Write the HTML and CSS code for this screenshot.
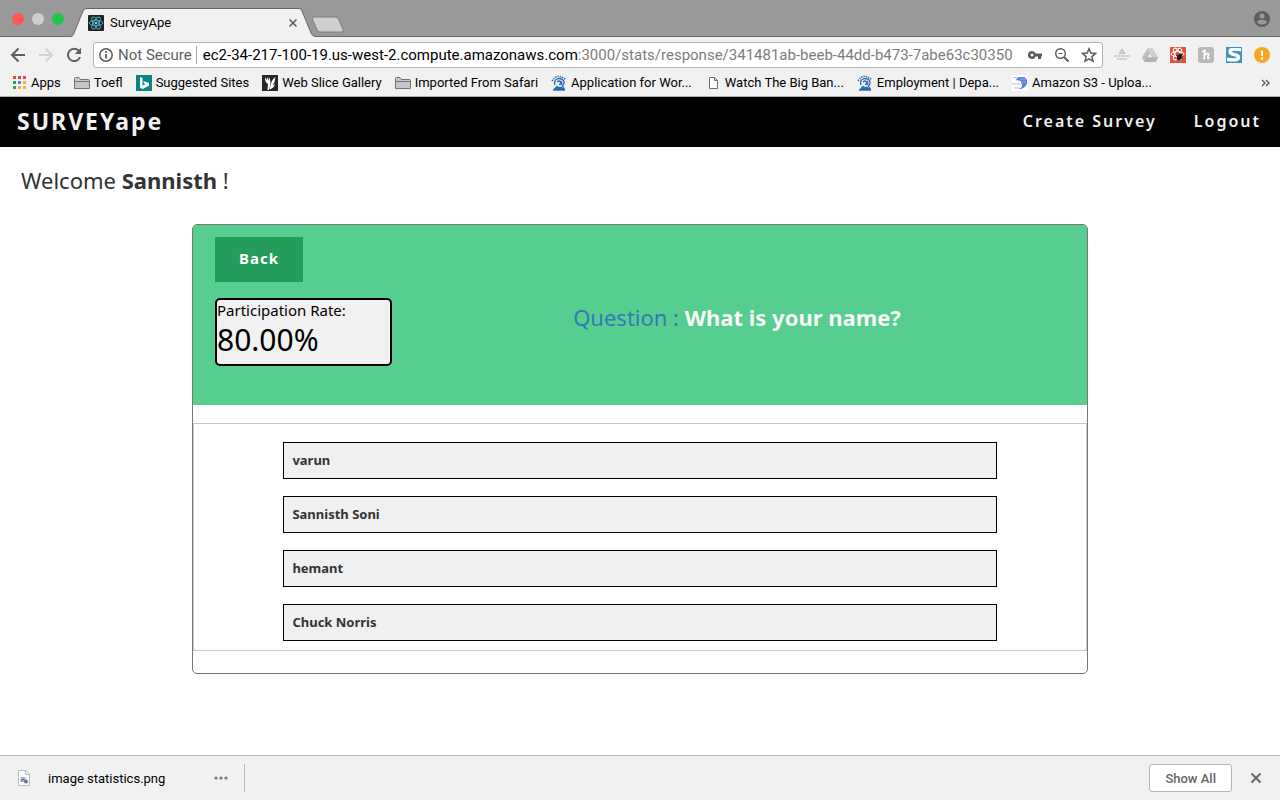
FILE: index.html
```html
<!DOCTYPE html>
<html lang="en">
<head>
<meta charset="utf-8">
<title>SurveyApe</title>
<link rel="stylesheet" href="styles.css">
</head>
<body>
<header class="browser">
  <div class="tabstrip">
    <div class="lights">
      <button class="light light-close" aria-label="Close window"></button>
      <button class="light light-min" aria-label="Minimize window"></button>
      <button class="light light-max" aria-label="Zoom window"></button>
    </div>
    <div class="tab">
      <svg class="tab-shape" viewBox="0 0 244 29" aria-hidden="true"><path d="M0 28.500C2 28 2.500 27 3 25L12 3Q13.500.5 15 .5H228Q230 .5 231 3L240 25Q241 28 244 28.500V29H0Z" fill="#f1f1f1"/><path d="M0 28.500C2 28 2.500 27 3 25L12 3Q13.500.5 15 .5H228Q230 .5 231 3L240 25Q241 28 244 28.500" fill="none" stroke="#666"/></svg>
      <svg class="icon16" viewBox="0 0 16 16" aria-hidden="true"><rect width="16" height="16" rx="1" fill="#222"/><g fill="none" stroke="#4fb3cf" stroke-width=".9"><ellipse cx="8" cy="8" rx="6.800" ry="2.600"/><ellipse cx="8" cy="8" rx="6.800" ry="2.600" transform="rotate(60 8 8)"/><ellipse cx="8" cy="8" rx="6.800" ry="2.600" transform="rotate(120 8 8)"/></g><circle cx="8" cy="8" r="1.300" fill="#61dafb"/></svg>
      <span class="tab-title">SurveyApe</span>
      <button class="plain" aria-label="Close tab"><svg width="10" height="10" viewBox="0 0 10 10"><path d="M1.500 1.500l7 7m0-7l-7 7" stroke="#5a5a5a" stroke-width="1.500"/></svg></button>
    </div>
    <button class="plain newtab" aria-label="New tab"><svg width="34" height="17" viewBox="0 0 34 17"><path d="M3 1H24Q26.500 1 27.500 3L32 13.500Q32.500 16 30.500 16H9Q7 16 6 14L1.500 3Q1 1 3 1Z" fill="#cfcfcf" stroke="#808080"/></svg></button>
    <button class="plain profile" aria-label="Profile"><svg width="16" height="16" viewBox="0 0 16 16"><circle cx="8" cy="8" r="8" fill="#5e5e5e"/><circle cx="8" cy="5" r="2.500" fill="#999"/><path d="M3 11Q4 8.800 8 8.800T13 11Q11.500 13.500 8 13.500T3 11Z" fill="#999"/></svg></button>
  </div>

  <div class="toolbar">
    <nav class="history" aria-label="History">
      <button class="plain" aria-label="Back"><svg width="16" height="16" viewBox="0 0 16 16"><path d="M15 8H2M8.500 1.500L2 8l6.500 6.500" fill="none" stroke="#5f5f5f" stroke-width="2"/></svg></button>
      <button class="plain" aria-label="Forward"><svg width="16" height="16" viewBox="0 0 16 16"><path d="M1 8H14M7.500 1.500L14 8l-6.500 6.500" fill="none" stroke="#d4d4d4" stroke-width="2"/></svg></button>
      <button class="plain" aria-label="Reload"><svg width="16" height="16" viewBox="0 0 16 16"><path d="M13 4A6.200 6.200 0 1 0 14 10" fill="none" stroke="#5f5f5f" stroke-width="2"/><path d="M15 .8V7H8.800Z" fill="#5f5f5f"/></svg></button>
    </nav>
    <div class="omnibox">
      <svg width="14" height="14" viewBox="0 0 14 14" aria-hidden="true"><circle cx="7" cy="7" r="6.200" fill="none" stroke="#5a5a5a" stroke-width="1.500"/><path d="M7 6v4.500" stroke="#5a5a5a" stroke-width="1.800"/><circle cx="7" cy="4" r="1" fill="#5a5a5a"/></svg>
      <span class="secure">Not Secure</span>
      <label class="host" for="path">ec2-34-217-100-19.us-west-2.compute.amazonaws.com</label><input class="path" id="path" value=":3000/stats/response/341481ab-beeb-44dd-b473-7abe63c30350">
      <div class="omni-actions">
        <button class="plain" aria-label="Saved password"><svg width="16" height="16" viewBox="0 0 16 16"><path d="M5 4A4 4 0 1 0 8.700 9.500H11V12H14V9.500H15V6.500H8.700A4 4 0 0 0 5 4ZM5 6.500A1.500 1.500 0 1 1 5 9.500 1.500 1.500 0 0 1 5 6.500Z" fill="#5a5a5a" fill-rule="evenodd"/></svg></button>
        <button class="plain" aria-label="Zoom"><svg width="16" height="16" viewBox="0 0 16 16"><circle cx="6.500" cy="6.500" r="4.800" fill="none" stroke="#5a5a5a" stroke-width="1.400"/><path d="M10 10l4.500 4.500" stroke="#5a5a5a" stroke-width="2"/><path d="M4.500 6.500h4" stroke="#5a5a5a"/></svg></button>
        <button class="plain" aria-label="Bookmark"><svg width="16" height="16" viewBox="0 0 16 16"><path d="M8 1.800l1.800 4.300 4.700.4-3.600 3.100 1.100 4.600L8 11.800l-4 2.400 1.100-4.600L1.500 6.500l4.700-.4Z" fill="none" stroke="#5a5a5a" stroke-width="1.500"/></svg></button>
      </div>
    </div>
    <div class="extensions">
      <button class="plain" aria-label="Extension"><svg width="16" height="16" viewBox="0 0 16 16"><path d="M8 2l3 4.500H5Z" fill="#d0d0d0" stroke="#c2c2c2"/><path d="M0 9h16" stroke="#c4c4c4" stroke-width="1.600" stroke-dasharray="3 .6"/><path d="M3 12h10" stroke="#c4c4c4" stroke-width="1.600" stroke-dasharray="2.500 .5"/></svg></button>
      <button class="plain" aria-label="Drive"><svg width="16" height="16" viewBox="0 0 16 16"><path d="M5.500 1.500h5L16 10.500 13.500 15H2.500L0 10.500Z" fill="#bdbdbd"/><path d="M5.500 1.500h5L16 10.500h-5Z" fill="#d0d0d0"/><path d="M8 6.500l2.500 4h-5Z" fill="#eee"/><path d="M5 10.500h11L13.500 15H2.500Z" fill="#b2b2b2"/></svg></button>
      <button class="plain" aria-label="React tools"><svg width="16" height="16" viewBox="0 0 16 16"><rect width="16" height="16" fill="#df5640"/><g fill="none" stroke="#fff"><ellipse cx="7.500" cy="7" rx="6.500" ry="2.600"/><ellipse cx="7.500" cy="7" rx="6.500" ry="2.600" transform="rotate(60 7.500 7)"/><ellipse cx="7.500" cy="7" rx="6.500" ry="2.600" transform="rotate(120 7.500 7)"/></g><ellipse cx="9.500" cy="10" rx="2.400" ry="3.400" transform="rotate(35 9.500 10)" fill="#2b1a17"/><path d="M6 8l7 4M7.500 13l5-6M10 6l-1 8" stroke="#2b1a17" stroke-width=".8"/></svg></button>
      <button class="plain" aria-label="Honey"><svg width="16" height="16" viewBox="0 0 16 16"><rect width="16" height="16" rx="3" fill="#b9b9bb"/><path d="M4 5q2-1 3-2M7 3L6 12.500M6 9q2-3 4-2.500 1 .5 0 3T11.500 11" fill="none" stroke="#fff" stroke-width="1.700"/></svg></button>
      <button class="plain" aria-label="Screen tool"><svg width="16" height="16" viewBox="0 0 16 16"><rect width="16" height="16" fill="#4390c4"/><path d="M15.500 2.700Q4 .8 4 4.500 4 6.800 8 7.500 12.500 8.300 12.500 10.500 12.500 14 .5 12.300" fill="none" stroke="#fff" stroke-width="3.400"/><path d="M.5.500h15v15H.5Z" fill="none" stroke="#4390c4"/></svg></button>
      <button class="plain" aria-label="Browser update"><svg width="16" height="16" viewBox="0 0 16 16"><circle cx="8" cy="8" r="8" fill="#f5a623"/><path d="M8 3.500v5.500M8 10.500v2" stroke="#fff" stroke-width="2"/></svg></button>
    </div>
  </div>

  <nav class="bookmarks" aria-label="Bookmarks">
    <a href="#apps"><svg width="14" height="14" viewBox="0 0 14 14"><path d="M0 0h3v3H0ZM5 0h3v3H5ZM10 0h3v3h-3Z" fill="#e8453c"/><path d="M0 5h3v3H0Z" fill="#31a354"/><path d="M5 5h3v3H5Z" fill="#4285f4"/><path d="M10 5h3v3h-3ZM5 10h3v3H5ZM10 10h3v3h-3Z" fill="#f6b32b"/><path d="M0 10h3v3H0Z" fill="#31a354"/></svg>Apps</a>
    <a href="#toefl"><svg class="icon16" viewBox="0 0 16 16"><path d="M.5 13.500V3.500Q.5 2.500 1.500 2.500H5l1.500 2h8q1 0 1 1v8Z" fill="#c6c6c6" stroke="#737373"/><path d="M1 6.500h14" stroke="#737373"/></svg>Toefl</a>
    <a href="#suggested"><svg class="icon16" viewBox="0 0 16 16"><rect width="16" height="16" fill="#0b8484"/><path d="M4 2l2.500 1v7.500L9.500 9 8 8.300 7.200 6 13 8v2.800L6.500 14 4 12.500Z" fill="#fff"/></svg>Suggested Sites</a>
    <a href="#webslice"><svg class="icon16" viewBox="0 0 16 16"><rect width="16" height="16" fill="#25292c"/><path d="M3 2q-.5 5 3 7l-.5 6h1.500l1.500-6Q8.500 4 7 2.500L6.500 6 5.500 2 4.500 5ZM13.500 2q-4 3-4.500 7l-1.500 5h1.500q3.500-2 4-5-2 1-2.500 2 2.500-4 3-9Z" fill="#fff"/></svg>Web Slice Gallery</a>
    <a href="#imported"><svg class="icon16" viewBox="0 0 16 16"><path d="M.5 13.500V3.500Q.5 2.500 1.500 2.500H5l1.500 2h8q1 0 1 1v8Z" fill="#c6c6c6" stroke="#737373"/><path d="M1 6.500h14" stroke="#737373"/></svg>Imported From Safari</a>
    <a href="#application"><svg class="icon16" viewBox="0 0 16 16"><path d="M1 6Q6-2.500 14.500 4.500" fill="none" stroke="#2b6cb0" stroke-width="1.500" stroke-dasharray="1.400 1"/><path d="M4 10Q2.500 5.500 6 4t6.500 1.500Q14 8 11.500 11l1.500 2.500H4L6.500 11M6 7q2-2 3.500 0T8 9.500M10 6q1.500 2 0 4M2 15h12M5 12.300h6" fill="none" stroke="#2b6cb0" stroke-width="1.300"/></svg>Application for Wor...</a>
    <a href="#watch"><svg class="icon16" viewBox="0 0 16 16"><path d="M4.500 2.500h5l3 3v8h-8ZM9.500 2.500v3h3" fill="#fff" stroke="#6e6e6e"/></svg>Watch The Big Ban...</a>
    <a href="#employment"><svg class="icon16" viewBox="0 0 16 16"><path d="M1 6Q6-2.500 14.500 4.500" fill="none" stroke="#2b6cb0" stroke-width="1.500" stroke-dasharray="1.400 1"/><path d="M4 10Q2.500 5.500 6 4t6.500 1.500Q14 8 11.500 11l1.500 2.500H4L6.500 11M6 7q2-2 3.500 0T8 9.500M10 6q1.500 2 0 4M2 15h12M5 12.300h6" fill="none" stroke="#2b6cb0" stroke-width="1.300"/></svg>Employment | Depa...</a>
    <a href="#s3"><svg class="icon16" viewBox="0 0 16 16"><rect width="16" height="16" fill="#fff"/><path d="M6 2h6q4 1.500 3 6t-6 6H6q4-1 4-3.500L9 6 4 5Z" fill="#5b7ce0"/><path d="M8 4h6M10 7h4" stroke="#9db2ee"/><path d="M1 2.500h6M0 9h7q2 .5 1 2M2 13h6" fill="none" stroke="#b3c2f0"/></svg>Amazon S3 - Uploa...</a>
    <button class="plain more" aria-label="More bookmarks"><svg width="9" height="8" viewBox="0 0 9 8"><path d="M1 1l3 3-3 3M5 1l3 3-3 3" fill="none" stroke="#555" stroke-width="1.300"/></svg></button>
  </nav>
</header>

<div class="page">
  <nav class="navbar" aria-label="Main">
    <a class="brand" href="#home">SURVEYape</a>
    <div class="navlinks">
      <a href="#create">Create Survey</a>
      <a href="#logout">Logout</a>
    </div>
  </nav>
  <main>
    <h1 class="welcome">Welcome <strong>Sannisth</strong> !</h1>
    <section class="card">
      <div class="card-head">
        <button class="back">Back</button>
        <div class="summary">
          <div class="rate">
            <div class="rate-label">Participation Rate:</div>
            <div class="rate-value">80.00%</div>
          </div>
          <h2 class="question">Question : <strong>What is your name?</strong></h2>
        </div>
      </div>
      <ul class="answers">
        <li>varun</li>
        <li>Sannisth Soni</li>
        <li>hemant</li>
        <li>Chuck Norris</li>
      </ul>
    </section>
  </main>
</div>

<footer class="downloads">
  <div class="download">
    <svg class="icon16" viewBox="0 0 16 16" aria-hidden="true"><path d="M2.500.500h7l4 4v11h-11Z" fill="#fcfcfc" stroke="#bbb"/><path d="M9.500.500v4h4" fill="none" stroke="#bbb"/><path d="M4.500 7h5v5h-5Z" fill="#9bb6d8"/><path d="M5 11l2-2 4 3" stroke="#6b5e50" fill="none"/><circle cx="10" cy="11.500" r="2" fill="#777"/></svg>
    <span class="filename">image statistics.png</span>
    <button class="plain" aria-label="Download options"><svg width="14" height="4" viewBox="0 0 14 4"><g fill="#777"><circle cx="2" cy="2" r="1.600"/><circle cx="7" cy="2" r="1.600"/><circle cx="12" cy="2" r="1.600"/></g></svg></button>
  </div>
  <button class="showall">Show All</button>
  <button class="plain" aria-label="Close downloads bar"><svg width="12" height="12" viewBox="0 0 12 12"><path d="M1.500 1.500l9 9m0-9l-9 9" stroke="#666" stroke-width="2"/></svg></button>
</footer>
</body>
</html>
```
FILE: styles.css
```css
* { box-sizing: border-box; }

body {
  margin: 0;
  min-height: 100vh;
  display: flex;
  flex-direction: column;
  background: #fff;
  font-family: "Noto Sans", sans-serif;
  color: #333;
}

a { color: inherit; text-decoration: none; }
svg { display: block; flex: none; }
.icon16 { width: 16px; height: 16px; }

.plain {
  border: 0;
  padding: 0;
  background: none;
  display: block;
}

/* Browser window */
.browser {
  background: #f1f1f1;
  border-bottom: 1px solid #b0b0b0;
  font-family: Roboto, sans-serif;
  font-size: 13px;
  color: #000;
}

.tabstrip {
  height: 37px;
  display: flex;
  align-items: flex-end;
  background: #999;
  box-shadow: inset 0 -1px #6a6a6a;
}

.lights {
  align-self: center;
  display: flex;
  gap: 8px;
  width: 71px;
  padding-left: 12px;
}
.light {
  width: 12px;
  height: 12px;
  padding: 0;
  border: 0;
  border-radius: 50%;
}
.light-close { background: #fc5753; }
.light-min { background: #cfcfcf; }
.light-max { background: #1fc64b; }

.tab {
  position: relative;
  width: 244px;
  height: 29px;
  display: flex;
  align-items: center;
  gap: 6px;
  padding: 0 17px;
}
.tab-shape {
  position: absolute;
  inset: 0;
  width: 100%;
  height: 100%;
}
.tab > :not(.tab-shape) { position: relative; }
.tab-title { flex: 1; }
.newtab { margin-bottom: 4px; margin-left: -4px; }
.profile { margin: 0 10px 10px auto; }

.toolbar {
  display: flex;
  align-items: center;
  gap: 11px;
  height: 36px;
  padding: 0 10px;
}
.history { display: flex; gap: 12px; }
.omnibox {
  flex: 1;
  display: flex;
  align-items: center;
  height: 26px;
  padding: 0 5px;
  border: 1px solid #b4b4b4;
  border-radius: 3px;
  background: #fff;
  font-size: 15px;
}
.secure {
  margin: 0 6px 0 5px;
  padding-right: 4px;
  border-right: 1px solid #aaa;
  color: #5f5f5f;
  white-space: nowrap;
}
.path {
  flex: 1;
  min-width: 0;
  padding: 0;
  border: 0;
  outline: 0;
  background: none;
  font: inherit;
  color: #7d7d7d;
}
.omni-actions { display: flex; gap: 11px; }
.extensions { display: flex; gap: 12px; }

.bookmarks {
  display: flex;
  align-items: center;
  gap: 13px;
  height: 23px;
  padding: 0 10px 4px 13px;
  white-space: nowrap;
}
.bookmarks a { display: flex; align-items: center; gap: 4px; }
.more { margin-left: auto; }

/* Page */
.page { flex: 1; }

.navbar {
  display: flex;
  align-items: center;
  justify-content: space-between;
  height: 50px;
  padding: 0 19px 2px 17px;
  background: #000;
  color: #f1f1f1;
}
.brand {
  font-size: 23px;
  font-weight: 700;
  letter-spacing: 2px;
}
.navlinks {
  display: flex;
  gap: 37px;
  font-size: 16px;
  font-weight: 600;
  letter-spacing: 2px;
}

.welcome {
  margin: 17px 21px 28px;
  font-size: 22px;
  line-height: 32px;
  font-weight: 400;
}

.card {
  width: 70%;
  margin: 0 auto;
  padding-bottom: 22px;
  border: 1px solid #777;
  border-radius: 5px;
  overflow: hidden;
}
.card-head {
  padding: 12px 22px 39px;
  background: #56ce8f;
}
.back {
  display: block;
  height: 45px;
  padding: 0 24px 3px;
  border: 0;
  background: #249c5b;
  color: #fff;
  font: 700 15px "Noto Sans", sans-serif;
  letter-spacing: 1px;
}
.summary {
  display: grid;
  grid-template-columns: 177px 1fr;
  gap: 17px;
  margin-top: 16px;
}
.rate {
  height: 68px;
  border: 2px solid #000;
  border-radius: 5px;
  background: #f1f1f1;
  color: #000;
}
.rate-label { font-size: 15px; line-height: 20px; }
.rate-value { font-size: 30px; line-height: 40px; }
.question {
  margin: 3px 0 0;
  text-align: center;
  font-size: 22px;
  line-height: 32px;
  font-weight: 400;
  color: #337ab7;
}
.question strong { color: #f8f8f8; }

.answers {
  display: flex;
  flex-direction: column;
  gap: 17px;
  margin: 18px 0 0;
  padding: 18px 10% 9px;
  border: 1px solid #c8c8c8;
  list-style: none;
}
.answers li {
  padding: 7px 8px 8px;
  border: 1px solid #000;
  background: #f0f0f0;
  font-size: 13px;
  line-height: 20px;
  font-weight: 700;
}

/* Downloads shelf */
.downloads {
  display: flex;
  align-items: center;
  height: 45px;
  padding: 0 18px 0 16px;
  border-top: 1px solid #b4b4b4;
  background: #f1f1f1;
  font-family: Roboto, sans-serif;
  font-size: 13px;
  color: #000;
}
.download {
  display: flex;
  align-items: center;
  width: 229px;
  height: 28px;
  margin-right: auto;
  padding-right: 16px;
  border-right: 1px solid #bbb;
}
.filename { flex: 1; margin-left: 16px; }
.showall {
  height: 28px;
  margin-right: 18px;
  padding: 0 15px;
  border: 1px solid #b4b4b4;
  border-radius: 3px;
  background: #fff;
  color: #666;
  font: 500 13px Roboto, sans-serif;
}
```
